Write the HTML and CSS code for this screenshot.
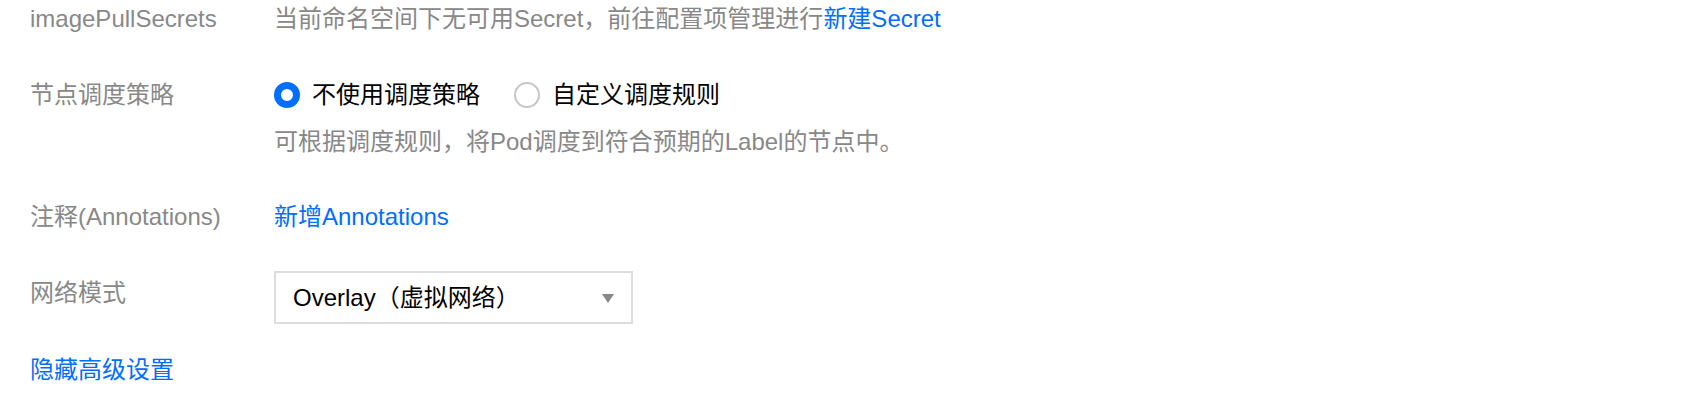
FILE: index.html
```html
<!DOCTYPE html>
<html lang="zh-CN">
<head>
<meta charset="utf-8">
<link rel="stylesheet" href="styles.css">
</head>
<body>
<div class="form">
  <div class="row row-secrets">
    <div class="label">imagePullSecrets</div>
    <div class="field"><span class="muted">当前命名空间下无可用Secret，前往配置项管理进行</span><a class="link">新建Secret</a></div>
  </div>
  <div class="row row-sched">
    <div class="label">节点调度策略</div>
    <div class="field">
      <div class="radios">
        <label class="radio"><span class="dot checked"></span><span>不使用调度策略</span></label>
        <label class="radio"><span class="dot"></span><span>自定义调度规则</span></label>
      </div>
      <div class="hint">可根据调度规则，将Pod调度到符合预期的Label的节点中。</div>
    </div>
  </div>
  <div class="row row-anno">
    <div class="label">注释(Annotations)</div>
    <div class="field"><a class="link">新增Annotations</a></div>
  </div>
  <div class="row row-net">
    <div class="label label-select">网络模式</div>
    <div class="field">
      <div class="select"><span>Overlay（虚拟网络）</span><span class="caret"></span></div>
    </div>
  </div>
  <div class="toggle"><a class="link">隐藏高级设置</a></div>
</div>
</body>
</html>
```

FILE: styles.css
```css
html, body {
  margin: 0;
  padding: 0;
  background: #fff;
}
body {
  font-family: "Liberation Sans", "Noto Sans CJK SC", sans-serif;
  font-size: 24px;
  line-height: 36px;
  color: #000;
}
.form {
  padding: 1px 0 0 30px;
  display: flex;
  flex-direction: column;
}
.row {
  display: grid;
  grid-template-columns: 244px 1fr;
}
.label {
  color: #888;
  white-space: nowrap;
}
.muted { color: #888; }
.link {
  color: #006eff;
  cursor: pointer;
  text-decoration: none;
}
.row-sched { margin-top: 40px; }
.radios {
  display: flex;
  gap: 34px;
  height: 36px;
  align-items: center;
}
.radio {
  display: flex;
  align-items: center;
  gap: 12px;
}
.dot {
  width: 26px;
  height: 26px;
  box-sizing: border-box;
  border-radius: 50%;
  border: 2px solid #c6c6c6;
  background: #fff;
}
.dot.checked {
  border: 7px solid #006eff;
}
.hint {
  margin-top: 11px;
  color: #888;
}
.row-anno { margin-top: 39px; }
.row-net { margin-top: 36px; }
.label-select { padding-top: 4px; }
.select {
  width: 359px;
  height: 53px;
  box-sizing: border-box;
  border: 2px solid #ddd;
  display: flex;
  align-items: center;
  justify-content: space-between;
  padding: 0 17px 0 17px;
}
.caret {
  width: 0;
  height: 0;
  border-left: 6px solid transparent;
  border-right: 6px solid transparent;
  border-top: 9px solid #888;
  margin-top: 2px;
}
.toggle { margin-top: 28px; }
```
